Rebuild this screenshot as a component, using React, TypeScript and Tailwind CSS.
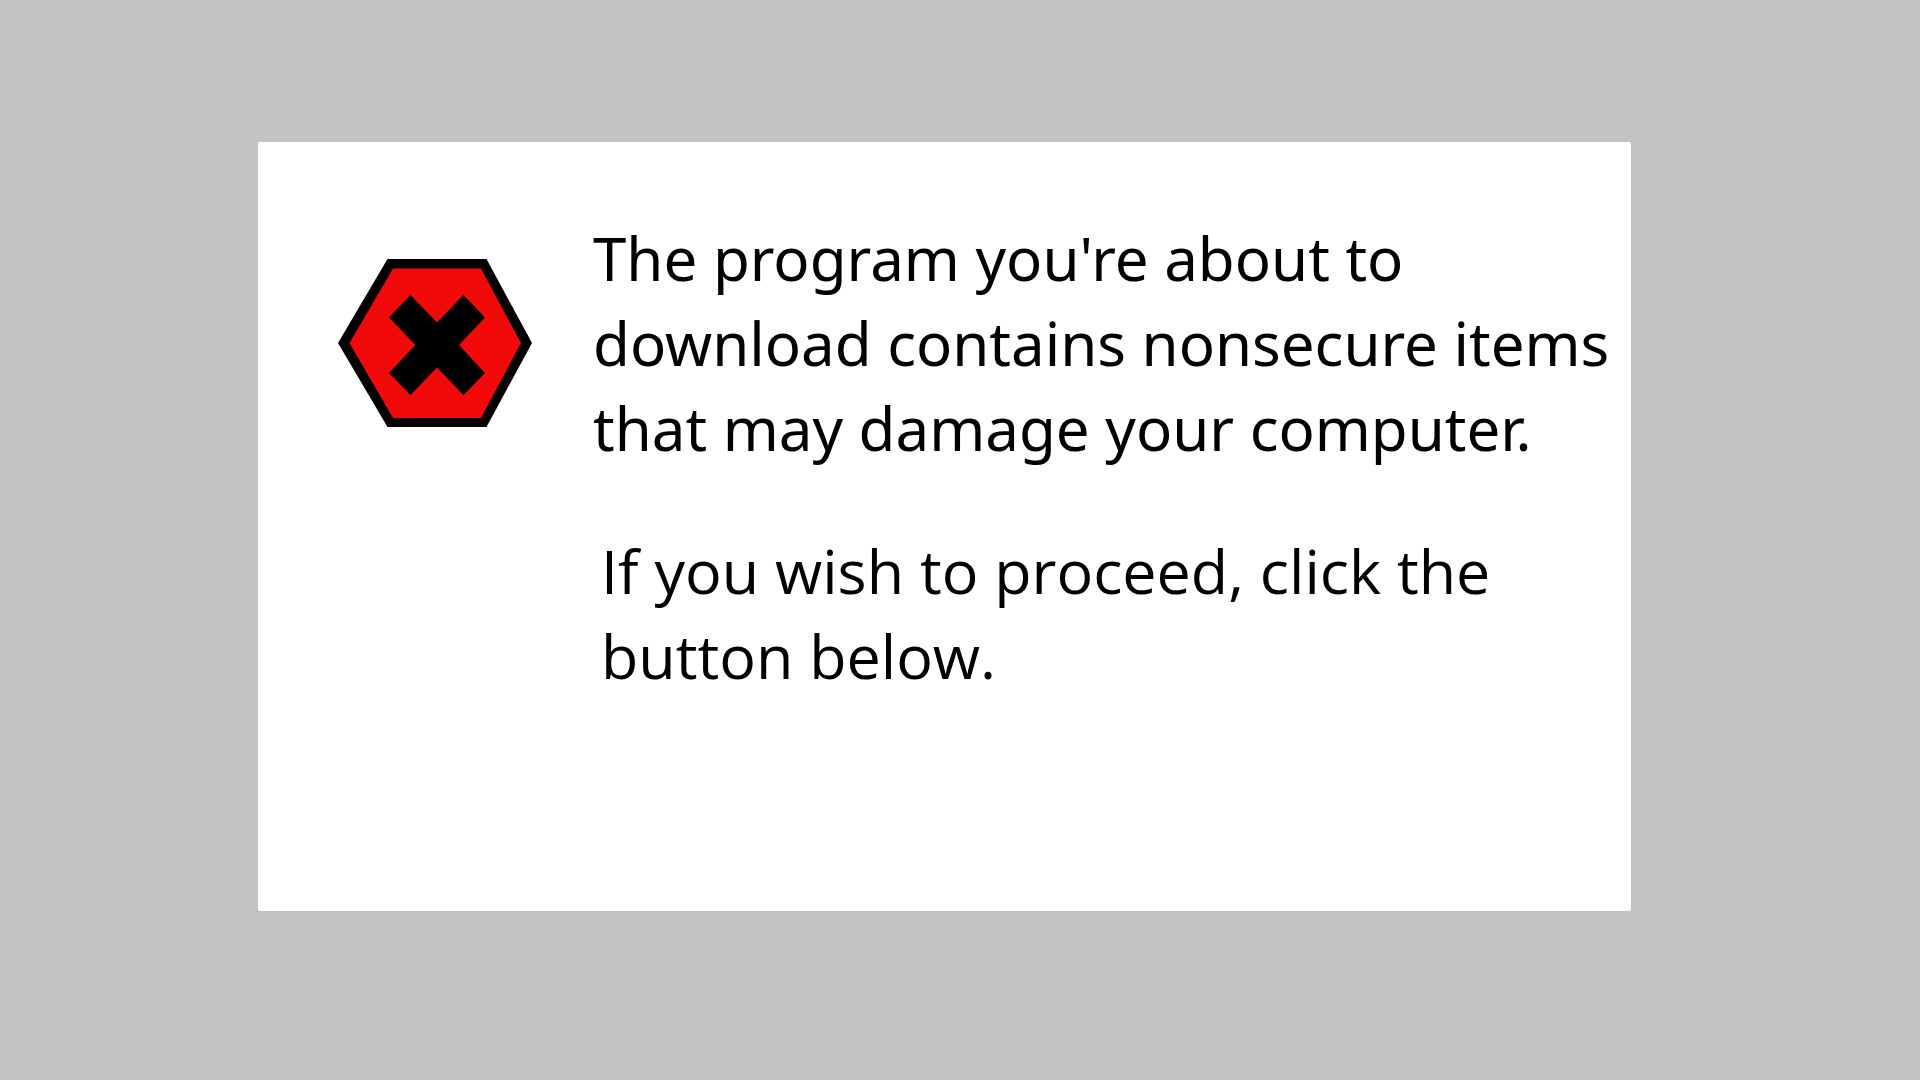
export default function App() {
  return (
    <main className="flex min-h-screen flex-col bg-[#c3c3c3] pt-[142px] pr-[289px] pb-[169px] pl-[258px] text-black">
      <section role="alertdialog" aria-labelledby="warning" className="flex flex-1 items-start rounded-xs bg-white pt-[74px] pl-[80px]">
        <svg viewBox="0 0 194 168" className="mt-[43px] w-[194px] shrink-0" aria-hidden="true">
          <path d="M0 84 49.5 0H148.5L194 84 148.5 168H49.5Z" fill="#000" />
          <path d="M11.5 84 55 9.5H143L183 84 143 159H55Z" fill="#f20a0a" />
          <path d="M51 58.5 72.5 36 99 63.5 125.5 36 147 58.5 121 86 147 114 125.5 136 99 108.5 72.5 136 51 114 77.5 86Z" fill="#000" />
        </svg>
        <div className="ml-[61px] flex-1 leading-[85px]">
          <p id="warning" className="font-['Noto_Sans','Open_Sans',sans-serif] text-[60px]">
            The program you're about to
            <br />
            download contains nonsecure items
            <br />
            that may damage your computer.
          </p>
          <p className="mt-[57px] ml-2 font-['Open_Sans','Noto_Sans',sans-serif] text-[61px]">
            If you wish to proceed, click the
            <br />
            button below.
          </p>
        </div>
      </section>
    </main>
  );
}
